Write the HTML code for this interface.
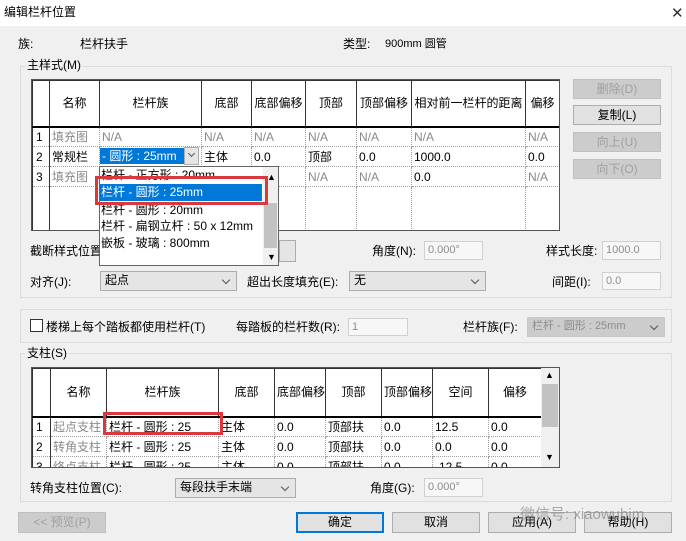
<!DOCTYPE html>
<html><head><meta charset="utf-8"><style>
*{margin:0;padding:0;box-sizing:border-box}
body{width:686px;height:541px;background:#f0f0f0;font-family:"Liberation Sans","Noto Sans CJK SC",sans-serif;font-size:12px;color:#000;position:relative;overflow:hidden}
.a{position:absolute;white-space:nowrap}
.t{line-height:14px}
.grp{position:absolute;border:1px solid #dcdcdc}
.btn{position:absolute;background:#e1e1e1;border:1px solid #adadad;text-align:center;line-height:18px}
.dis{color:#a0a0a0;background:#cccccc;border-color:#bfbfbf}
.inp{position:absolute;background:#f7f7f7;border:1px solid #d0d0d0;color:#8c8c8c;padding-left:3px;line-height:16px;font-size:11px}
.cmb{position:absolute;background:#e5e5e5;border:1px solid #acacac;padding-left:4px;line-height:17px}
.cmb:after{content:"";position:absolute;right:7px;top:5px;width:5px;height:5px;border-right:1px solid #555;border-bottom:1px solid #555;transform:rotate(45deg)}
table{border-collapse:collapse;table-layout:fixed;background:#fff}
td{border:1px dotted #a0a0a0;padding:0 2px;font-size:12px;overflow:hidden;white-space:nowrap;line-height:18px}
tr.h td{border:1px solid #333;border-bottom:2px solid #000;text-align:center;background:#fff}
td.n{border-right:1px solid #333;border-left:1px solid #333;padding-left:3px}
.g{color:#8a8a8a}
</style></head><body>
<div class="a" style="left:0;top:0;width:686px;height:26px;background:#fff"></div>
<div class="a t" style="left:4px;top:5px;font-size:12px">编辑栏杆位置</div>
<div class="a" style="left:671px;top:4px;font-size:15px;color:#333">✕</div>

<div class="a t" style="left:18px;top:37px">族:</div>
<div class="a t" style="left:80px;top:37px">栏杆扶手</div>
<div class="a t" style="left:343px;top:37px">类型:</div>
<div class="a t" style="left:385px;top:37px;font-size:11px">900mm 圆管</div>

<div class="grp" style="left:20px;top:66px;width:652px;height:232px"></div>
<div class="a t" style="left:25px;top:58px;background:#f0f0f0;padding:0 2px">主样式(M)</div>

<div class="a" style="left:31px;top:79px;width:529px;height:152px;border:1px solid #555;background:#fff;overflow:hidden">
<table style="width:527px">
<colgroup><col style="width:17px"><col style="width:50px"><col style="width:102px"><col style="width:50px"><col style="width:54px"><col style="width:51px"><col style="width:55px"><col style="width:114px"><col style="width:34px"></colgroup>
<tr class="h" style="height:46px"><td></td><td>名称</td><td>栏杆族</td><td>底部</td><td>底部偏移</td><td>顶部</td><td>顶部偏移</td><td>相对前一栏杆的距离</td><td>偏移</td></tr>
<tr style="height:20px"><td class="n">1</td><td class="g">填充图</td><td class="g">N/A</td><td class="g">N/A</td><td class="g">N/A</td><td class="g">N/A</td><td class="g">N/A</td><td class="g">N/A</td><td class="g">N/A</td></tr>
<tr style="height:20px"><td class="n">2</td><td>常规栏</td><td></td><td>主体</td><td>0.0</td><td>顶部</td><td>0.0</td><td>1000.0</td><td>0.0</td></tr>
<tr style="height:20px"><td class="n">3</td><td class="g">填充图</td><td></td><td></td><td class="g">N/A</td><td class="g">N/A</td><td class="g">N/A</td><td>0.0</td><td class="g">N/A</td></tr>
<tr style="height:44px"><td class="n"></td><td></td><td></td><td></td><td></td><td></td><td></td><td></td><td></td></tr>
</table></div>

<div class="a" style="left:100px;top:148px;width:84px;height:16px;background:#0078d7;color:#fff;line-height:16px;padding-left:2px">- 圆形 : 25mm</div>
<div class="a" style="left:184px;top:147px;width:15px;height:18px;background:#e5e5e5;border:1px solid #acacac"></div>
<div class="a" style="left:189px;top:151px;width:5px;height:5px;border-right:1px solid #555;border-bottom:1px solid #555;transform:rotate(45deg)"></div>

<div class="btn dis" style="left:573px;top:79px;width:88px;height:20px">删除(D)</div>
<div class="btn" style="left:573px;top:105px;width:88px;height:20px">复制(L)</div>
<div class="btn dis" style="left:573px;top:132px;width:88px;height:20px">向上(U)</div>
<div class="btn dis" style="left:573px;top:159px;width:88px;height:20px">向下(O)</div>

<div class="a t" style="left:30px;top:244px">截断样式位置</div>
<div class="a" style="left:279px;top:240px;width:17px;height:22px;background:#e5e5e5;border:1px solid #acacac"></div>
<div class="a t" style="left:372px;top:244px">角度(N):</div>
<div class="inp" style="left:424px;top:241px;width:59px;height:19px">0.000°</div>
<div class="a t" style="left:546px;top:244px">样式长度:</div>
<div class="inp" style="left:602px;top:241px;width:59px;height:19px">1000.0</div>

<div class="a t" style="left:30px;top:275px">对齐(J):</div>
<div class="cmb" style="left:100px;top:271px;width:137px;height:20px">起点</div>
<div class="a t" style="left:247px;top:275px">超出长度填充(E):</div>
<div class="cmb" style="left:349px;top:271px;width:137px;height:20px">无</div>
<div class="a t" style="left:552px;top:275px">间距(I):</div>
<div class="inp" style="left:602px;top:272px;width:59px;height:18px">0.0</div>

<div class="a" style="left:99px;top:166px;width:180px;height:100px;background:#fff;border:1px solid #646464"></div>
<div class="a" style="left:101px;top:168px;line-height:15px">栏杆 - 正方形 : 20mm</div>
<div class="a" style="left:100px;top:184px;width:162px;height:17px;background:#0078d7;color:#fff;line-height:17px;padding-left:1px">栏杆 - 圆形 : 25mm</div>
<div class="a" style="left:101px;top:203px;line-height:15px">栏杆 - 圆形 : 20mm</div>
<div class="a" style="left:101px;top:219px;line-height:15px">栏杆 - 扁钢立杆 : 50 x 12mm</div>
<div class="a" style="left:101px;top:236px;line-height:15px">嵌板 - 玻璃 : 800mm</div>
<div class="a" style="left:263px;top:167px;width:15px;height:98px;background:#f0f0f0"></div>
<div class="a" style="left:264px;top:203px;width:13px;height:45px;background:#c2c2c2"></div>
<div class="a" style="left:267px;top:172px;font-size:9px">▲</div>
<div class="a" style="left:267px;top:252px;font-size:9px">▼</div>
<div class="a" style="left:95px;top:176px;width:173px;height:29px;border:3px solid #d9383f"></div>

<div class="grp" style="left:20px;top:309px;width:652px;height:34px"></div>
<div class="a" style="left:30px;top:319px;width:13px;height:13px;border:1px solid #333;background:#fff"></div>
<div class="a t" style="left:46px;top:320px">楼梯上每个踏板都使用栏杆(T)</div>
<div class="a t" style="left:236px;top:320px">每踏板的栏杆数(R):</div>
<div class="inp" style="left:348px;top:318px;width:60px;height:18px">1</div>
<div class="a t" style="left:463px;top:320px">栏杆族(F):</div>
<div class="cmb" style="left:527px;top:317px;width:138px;height:20px;background:#cccccc;border-color:#c8c8c8;color:#8c8c8c;font-size:11px">栏杆 - 圆形 : 25mm</div>

<div class="grp" style="left:20px;top:353px;width:652px;height:149px"></div>
<div class="a t" style="left:25px;top:346px;background:#f0f0f0;padding:0 2px">支柱(S)</div>

<div class="a" style="left:31px;top:367px;width:529px;height:101px;border:1px solid #555;background:#fff;overflow:hidden">
<table style="width:509px">
<colgroup><col style="width:18px"><col style="width:56px"><col style="width:112px"><col style="width:56px"><col style="width:51px"><col style="width:56px"><col style="width:51px"><col style="width:56px"><col style="width:53px"></colgroup>
<tr class="h" style="height:48px"><td></td><td>名称</td><td>栏杆族</td><td>底部</td><td>底部偏移</td><td>顶部</td><td>顶部偏移</td><td>空间</td><td>偏移</td></tr>
<tr style="height:20px"><td class="n">1</td><td class="g">起点支柱</td><td>栏杆 - 圆形 : 25</td><td>主体</td><td>0.0</td><td>顶部扶</td><td>0.0</td><td>12.5</td><td>0.0</td></tr>
<tr style="height:20px"><td class="n">2</td><td class="g">转角支柱</td><td>栏杆 - 圆形 : 25</td><td>主体</td><td>0.0</td><td>顶部扶</td><td>0.0</td><td>0.0</td><td>0.0</td></tr>
<tr style="height:20px"><td class="n">3</td><td class="g">终点支柱</td><td>栏杆 - 圆形 : 25</td><td>主体</td><td>0.0</td><td>顶部扶</td><td>0.0</td><td>-12.5</td><td>0.0</td></tr>
</table>
<div class="a" style="left:509px;top:0;width:18px;height:99px;background:#f0f0f0"></div>
<div class="a" style="left:510px;top:16px;width:16px;height:43px;background:#c2c2c2"></div>
<div class="a" style="left:513px;top:2px;font-size:9px">▲</div>
<div class="a" style="left:513px;top:84px;font-size:9px">▼</div>
</div>
<div class="a" style="left:103px;top:412px;width:120px;height:23px;border:3px solid #d9383f"></div>

<div class="a t" style="left:30px;top:481px">转角支柱位置(C):</div>
<div class="cmb" style="left:175px;top:478px;width:121px;height:20px">每段扶手末端</div>
<div class="a t" style="left:370px;top:481px">角度(G):</div>
<div class="inp" style="left:424px;top:478px;width:59px;height:19px">0.000°</div>

<div class="btn dis" style="left:18px;top:512px;width:88px;height:21px">&lt;&lt; 预览(P)</div>
<div class="btn" style="left:296px;top:512px;width:88px;height:21px;border:2px solid #0078d7;line-height:17px">确定</div>
<div class="btn" style="left:392px;top:512px;width:88px;height:21px">取消</div>
<div class="btn" style="left:488px;top:512px;width:88px;height:21px">应用(A)</div>
<div class="btn" style="left:584px;top:512px;width:88px;height:21px">帮助(H)</div>
<div class="a" style="left:520px;top:503px;font-size:15px;color:rgba(120,120,120,0.6)">微信号: xiaowubim</div>
</body></html>
